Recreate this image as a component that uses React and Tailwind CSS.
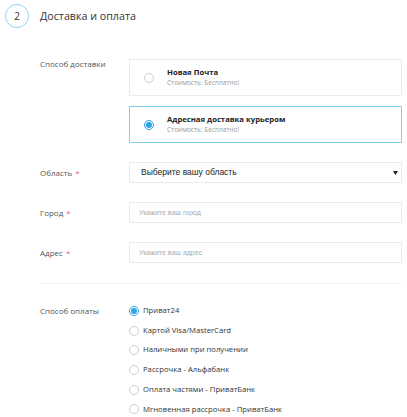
import React, { useState } from "react";

const font = { fontFamily: '"Open Sans", "Liberation Sans", sans-serif' };

function Radio({ checked }) {
  return (
    <span
      className={
        "flex h-[10px] w-[10px] shrink-0 items-center justify-center rounded-full border bg-white " +
        (checked ? "border-[#2ba5e3]" : "border-[#cfcfcf]")
      }
    >
      {checked && <span className="h-[6px] w-[6px] rounded-full bg-[#2ba5e3]" />}
    </span>
  );
}

function Label({ children, required }) {
  return (
    <div className="w-[89px] shrink-0 text-[8px] leading-[10px] text-[#555]">
      {children}
      {required && <span className="ml-[3px] text-[#f0605a]">*</span>}
    </div>
  );
}

const deliveries = [
  { id: "np", title: "Новая Почта", price: "Стоимость: Бесплатно!" },
  { id: "courier", title: "Адресная доставка курьером", price: "Стоимость: Бесплатно!" },
];

const payments = [
  "Приват24",
  "Картой Visa/MasterCard",
  "Наличными при получении",
  "Рассрочка - Альфабанк",
  "Оплата частями - ПриватБанк",
  "Мгновенная рассрочка - ПриватБанк",
];

export default function App() {
  const [delivery, setDelivery] = useState("courier");
  const [payment, setPayment] = useState(0);

  return (
    <div className="h-[417px] w-[407px] overflow-hidden bg-white" style={font}>
      <div className="flex h-8 items-center pl-[5px]">
        <div className="flex h-6 w-6 items-center justify-center rounded-full border border-[#8fd6f2] text-[10px] text-[#333]">
          2
        </div>
        <div className="ml-[11px] text-[10.7px] text-[#333]">Доставка и оплата</div>
      </div>

      <div className="pl-[40px] pr-[5px]">
        <div className="mt-[27px] flex">
          <Label>Способ доставки</Label>
          <div className="flex flex-1 flex-col gap-[10px]">
            {deliveries.map((d) => {
              const active = delivery === d.id;
              return (
                <div
                  key={d.id}
                  onClick={() => setDelivery(d.id)}
                  className={
                    "flex h-[37px] cursor-pointer items-center border pl-[14px] " +
                    (active ? "border-[#80d0f0]" : "border-[#ebebeb]")
                  }
                >
                  <Radio checked={active} />
                  <div className="ml-[13px] flex flex-col">
                    <span className="text-[7.7px] font-bold leading-[11px] text-[#222]">{d.title}</span>
                    <span className="text-[6.5px] leading-[10px] text-[#999]">{d.price}</span>
                  </div>
                </div>
              );
            })}
          </div>
        </div>

        <div className="mt-[19px] flex items-center">
          <Label required>Область</Label>
          <div className="relative flex h-[21px] flex-1 items-center border border-[#ebebeb] pl-[11px]">
            <span className="text-[8.5px] text-[#222]" style={{ fontFamily: '"Liberation Sans", sans-serif' }}>
              Выберите вашу область
            </span>
            <svg className="absolute right-[3px] top-[8px]" width="5" height="4" viewBox="0 0 5 4">
              <path d="M0 0h5L2.5 4z" fill="#222" />
            </svg>
          </div>
        </div>

        <div className="mt-[19px] flex items-center">
          <Label required>Город</Label>
          <input
            className="h-[21px] flex-1 border border-[#ebebeb] pl-[9px] text-[7px] text-[#333] outline-none placeholder:text-[#aaa]"
            style={{ fontFamily: '"Liberation Sans", sans-serif' }}
            placeholder="Укажите ваш город"
          />
        </div>

        <div className="mt-[19px] flex items-center">
          <Label required>Адрес</Label>
          <input
            className="h-[21px] flex-1 border border-[#ebebeb] pl-[9px] text-[7px] text-[#333] outline-none placeholder:text-[#aaa]"
            style={{ fontFamily: '"Liberation Sans", sans-serif' }}
            placeholder="Укажите ваш адрес"
          />
        </div>

        <div className="mt-[20px] h-px bg-[#f2f2f2]" />

        <div className="mt-[17px] flex">
          <div className="pt-[5px]">
            <Label>Способ оплаты</Label>
          </div>
          <div className="flex flex-col">
            {payments.map((p, i) => (
              <div
                key={p}
                onClick={() => setPayment(i)}
                className="flex h-[19.7px] cursor-pointer items-center"
              >
                <Radio checked={payment === i} />
                <span className="ml-[4px] text-[7.7px] text-[#333]">{p}</span>
              </div>
            ))}
          </div>
        </div>
      </div>
    </div>
  );
}
